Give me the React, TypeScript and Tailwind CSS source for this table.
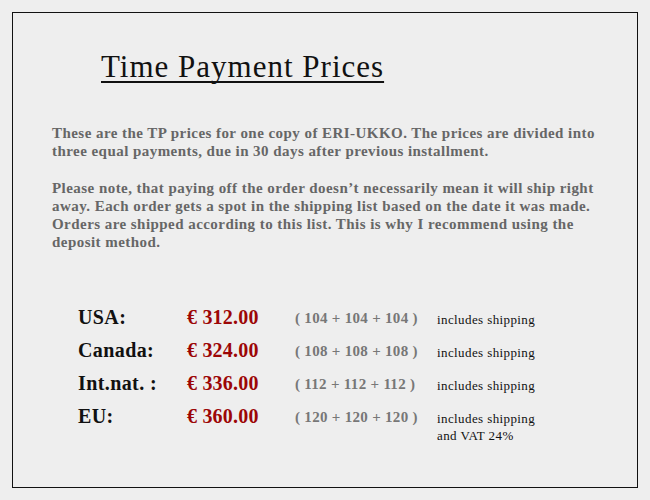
const rows = [
  { region: "USA:", price: "€ 312.00", parts: "( 104 + 104 + 104 )", note: ["includes shipping"] },
  { region: "Canada:", price: "€ 324.00", parts: "( 108 + 108 + 108 )", note: ["includes shipping"] },
  { region: "Int.nat. :", price: "€ 336.00", parts: "( 112 + 112 + 112 )", note: ["includes shipping"] },
  { region: "EU:", price: "€ 360.00", parts: "( 120 + 120 + 120 )", note: ["includes shipping", "and VAT 24%"] },
];

export default function App() {
  return (
    <div className="w-[650px] h-[500px] bg-[#eeeeee] p-3 font-['Liberation_Serif',serif]">
      <div className="h-[476px] w-[626px] border border-[#111]">
        <h1 className="ml-[88px] mt-[38px] w-fit text-[31px] leading-[32px] text-[#111] tracking-[1px] underline decoration-2 underline-offset-[4px] [text-decoration-skip-ink:none]">
          Time Payment Prices
        </h1>

        <div className="ml-[39px] mt-[41px] text-[15px] leading-[18px] font-bold text-[#666] tracking-[0.45px] whitespace-nowrap">
          <p>
            These are the TP prices for one copy of ERI-UKKO. The prices are divided into
            <br />
            three equal payments, due in 30 days after previous installment.
          </p>
          <p className="mt-[19px]">
            Please note, that paying off the order doesn’t necessarily mean it will ship right
            <br />
            away. Each order gets a spot in the shipping list based on the date it was made.
            <br />
            Orders are shipped according to this list. This is why I recommend using the
            <br />
            deposit method.
          </p>
        </div>

        <ul className="ml-[65px] mt-[55px] flex flex-col gap-[11px]">
          {rows.map(row => (
            <li key={row.region} className="flex items-start">
              <span className="w-[109px] text-[20px] leading-[22px] font-bold text-[#111] tracking-[0.4px]">{row.region}</span>
              <span className="w-[108px] text-[20px] leading-[22px] font-bold text-[#9c0606] tracking-[0.2px]">{row.price}</span>
              <span className="w-[142px] pt-[3px] text-[15px] leading-[18px] font-bold text-[#777] tracking-[0.3px]">{row.parts}</span>
              <span className="pt-[5px] text-[13px] leading-[17px] text-[#111] tracking-[0.4px]">
                {row.note.map(n => (
                  <span key={n} className="block">{n}</span>
                ))}
              </span>
            </li>
          ))}
        </ul>
      </div>
    </div>
  );
}
